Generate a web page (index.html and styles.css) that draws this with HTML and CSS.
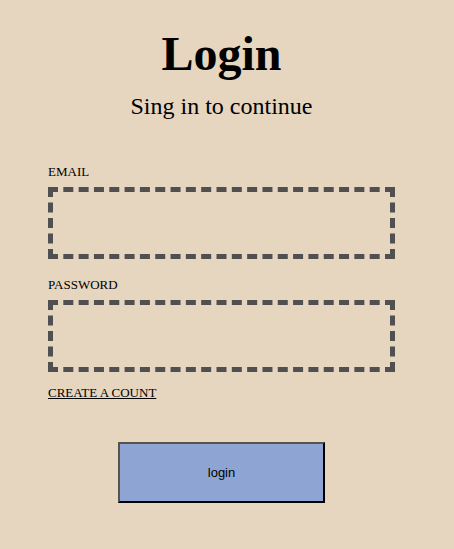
FILE: index.html
```html
<!DOCTYPE html>
<html>
<head>
<meta charset="utf-8">
<link rel="stylesheet" href="styles.css">
</head>
<body>
<form class="login">
  <h1 class="title">Login</h1>
  <p class="subtitle">Sing in to continue</p>
  <label class="label label-email" for="email">EMAIL</label>
  <input class="field" id="email" type="text">
  <label class="label label-password" for="password">PASSWORD</label>
  <input class="field" id="password" type="password">
  <a class="create" href="#">CREATE A COUNT</a>
  <div class="actions">
    <button class="btn" type="button">login</button>
  </div>
</form>
</body>
</html>
```
FILE: styles.css
```css
html, body {
  margin: 0;
  padding: 0;
  background: #e6d5bf;
}
body {
  font-family: "Liberation Serif", "Times New Roman", serif;
  color: #000;
  height: 549px;
}
.login {
  width: 347px;
  margin-left: 48px;
  padding-top: 26px;
}
.title {
  margin: 0;
  font-size: 48px;
  line-height: 56px;
  font-weight: bold;
  text-align: center;
}
.subtitle {
  margin: 11px 0 0;
  font-size: 24px;
  line-height: 27px;
  text-align: center;
}
.label {
  display: block;
  font-size: 13px;
  line-height: 15px;
}
.label-email {
  margin-top: 44px;
}
.label-password {
  margin-top: 18px;
}
.field {
  display: block;
  box-sizing: border-box;
  width: 347px;
  height: 72px;
  margin: 8px 0 0;
  border: 5px dashed #505050;
  background: transparent;
  outline: none;
}
.create {
  display: inline-block;
  margin-top: 13px;
  font-size: 13px;
  line-height: 15px;
  color: #000;
  text-decoration: underline;
}
.actions {
  margin-top: 41px;
  display: flex;
  justify-content: center;
}
.btn {
  box-sizing: border-box;
  width: 207px;
  height: 61px;
  background: #8ea5d3;
  border: 2px solid;
  border-color: #57544d #000 #000 #57544d;
  font-family: "Liberation Sans", Arial, sans-serif;
  font-size: 13px;
  color: #000;
  padding: 0;
}
```
